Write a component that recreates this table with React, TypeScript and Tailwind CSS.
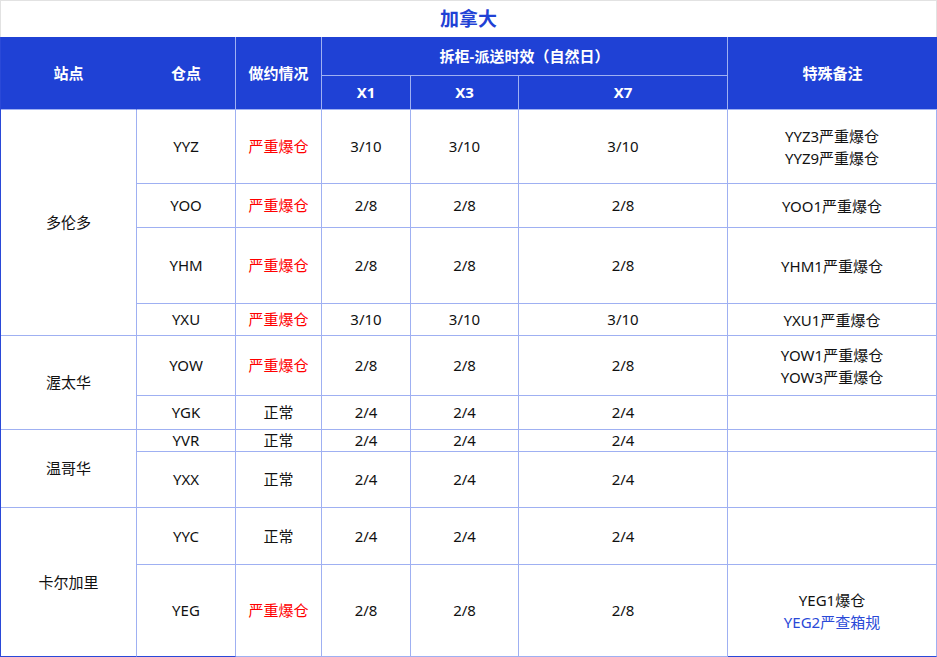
import React from "react";

type Row = {
  code: string;
  status: string;
  red: boolean;
  x1: string;
  x3: string;
  x7: string;
  notes: { text: string; blue?: boolean }[];
};

const rows: Row[] = [
  { code: "YYZ", status: "严重爆仓", red: true, x1: "3/10", x3: "3/10", x7: "3/10", notes: [{ text: "YYZ3严重爆仓" }, { text: "YYZ9严重爆仓" }] },
  { code: "YOO", status: "严重爆仓", red: true, x1: "2/8", x3: "2/8", x7: "2/8", notes: [{ text: "YOO1严重爆仓" }] },
  { code: "YHM", status: "严重爆仓", red: true, x1: "2/8", x3: "2/8", x7: "2/8", notes: [{ text: "YHM1严重爆仓" }] },
  { code: "YXU", status: "严重爆仓", red: true, x1: "3/10", x3: "3/10", x7: "3/10", notes: [{ text: "YXU1严重爆仓" }] },
  { code: "YOW", status: "严重爆仓", red: true, x1: "2/8", x3: "2/8", x7: "2/8", notes: [{ text: "YOW1严重爆仓" }, { text: "YOW3严重爆仓" }] },
  { code: "YGK", status: "正常", red: false, x1: "2/4", x3: "2/4", x7: "2/4", notes: [] },
  { code: "YVR", status: "正常", red: false, x1: "2/4", x3: "2/4", x7: "2/4", notes: [] },
  { code: "YXX", status: "正常", red: false, x1: "2/4", x3: "2/4", x7: "2/4", notes: [] },
  { code: "YYC", status: "正常", red: false, x1: "2/4", x3: "2/4", x7: "2/4", notes: [] },
  { code: "YEG", status: "严重爆仓", red: true, x1: "2/8", x3: "2/8", x7: "2/8", notes: [{ text: "YEG1爆仓" }, { text: "YEG2严查箱规", blue: true }] },
];

const rowStart = ["row-start-3", "row-start-4", "row-start-5", "row-start-6", "row-start-7", "row-start-8", "row-start-9", "row-start-10", "row-start-11", "row-start-12"];

const cell = "flex items-center justify-center border-r border-b border-[#9fb0f2] text-center";

export default function App() {
  return (
    <div
      className="w-[937px] bg-white text-[15px] text-[#111]"
      style={{ fontFamily: '"Noto Sans", "Noto Sans CJK SC", sans-serif' }}
    >
      <div className="flex h-[37px] items-center justify-center border-t border-l border-r border-[#e2e2e2] text-[19px] font-bold text-[#1f41d5]">
        加拿大
      </div>
      <div className="grid grid-cols-[136px_99px_86px_89px_108px_209px_209px] grid-rows-[39px_34px_74px_44px_76px_32px_60px_34px_22px_56px_57px_92px] border-l border-[#2a49d8]">
        {/* header */}
        <div className="col-start-1 row-start-1 row-span-2 flex items-center justify-center border-r border-b border-r-[#1f41d5] border-b-[#9fb0f2] bg-[#1f41d5] font-bold text-white">站点</div>
        <div className={`col-start-2 row-start-1 row-span-2 ${cell} bg-[#1f41d5] font-bold text-white`}>仓点</div>
        <div className={`col-start-3 row-start-1 row-span-2 ${cell} bg-[#1f41d5] font-bold text-white`}>做约情况</div>
        <div className={`col-start-4 col-span-3 row-start-1 ${cell} bg-[#1f41d5] font-bold text-white`}>拆柜-派送时效（自然日）</div>
        <div className="col-start-7 row-start-1 row-span-2 flex items-center justify-center border-b border-[#9fb0f2] bg-[#1f41d5] font-bold text-white">特殊备注</div>
        <div className={`col-start-4 row-start-2 ${cell} bg-[#1f41d5] font-bold text-white`}>X1</div>
        <div className={`col-start-5 row-start-2 ${cell} bg-[#1f41d5] font-bold text-white`}>X3</div>
        <div className={`col-start-6 row-start-2 ${cell} bg-[#1f41d5] font-bold text-white`}>X7</div>

        {/* station cells */}
        <div className={`col-start-1 row-start-3 row-span-4 ${cell}`}>多伦多</div>
        <div className={`col-start-1 row-start-7 row-span-2 ${cell}`}>渥太华</div>
        <div className={`col-start-1 row-start-9 row-span-2 ${cell}`}>温哥华</div>
        <div className={`col-start-1 row-start-11 row-span-2 ${cell} border-b-[#2a49d8]`}>卡尔加里</div>

        {rows.map((r, i) => {
          const rs = rowStart[i];
          const last = i === rows.length - 1;
          return (
            <React.Fragment key={r.code}>
              <div className={`col-start-2 ${rs} ${cell} ${last ? "border-b-[#2a49d8]" : ""}`}>{r.code}</div>
              <div className={`col-start-3 ${rs} ${cell} ${r.red ? "text-[#ff0000]" : ""}`}>{r.status}</div>
              <div className={`col-start-4 ${rs} ${cell}`}>{r.x1}</div>
              <div className={`col-start-5 ${rs} ${cell}`}>{r.x3}</div>
              <div className={`col-start-6 ${rs} ${cell}`}>{r.x7}</div>
              <div className={`col-start-7 ${rs} ${cell} flex-col leading-[22px] ${last ? "border-b-[#2a49d8]" : ""}`}>
                {r.notes.map((n) => (
                  <div key={n.text} className={n.blue ? "text-[#2a49d8]" : ""}>{n.text}</div>
                ))}
              </div>
            </React.Fragment>
          );
        })}
      </div>
    </div>
  );
}
